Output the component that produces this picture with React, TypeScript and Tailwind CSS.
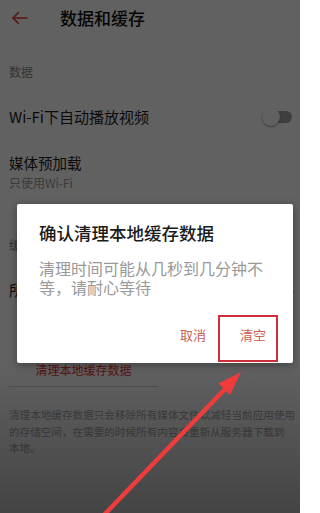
import React from "react";

export default function App() {
  return (
    <div className="relative w-[300px] h-[513px] overflow-hidden bg-white font-['Noto_Sans_CJK_SC','Noto_Sans',sans-serif]">
      {/* Page content */}
      <div className="flex flex-col">
        <div className="flex items-center h-[35px] pl-[11px]">
          <svg width="17" height="14" viewBox="0 0 17 14" fill="none" stroke="#e53935" strokeWidth="1.6" strokeLinecap="round" strokeLinejoin="round">
            <path d="M16 7H2" />
            <path d="M7.5 1.5L2 7l5.5 5.5" />
          </svg>
          <span className="ml-[32px] text-[17px] leading-[22px] font-medium text-[#111]">数据和缓存</span>
        </div>

        <div className="mt-[29px] pl-[9px] text-[12px] leading-[16px] text-[#8a8a8a]">数据</div>

        <div className="mt-[27px] flex items-center justify-between pl-[9px] pr-[8px] h-[20px]">
          <span className="text-[15px] leading-[20px] text-[#1e1e1e]">Wi-Fi下自动播放视频</span>
          <div className="relative w-[30px] h-[18px] flex items-center">
            <div className="absolute left-[3px] right-0 h-[12px] rounded-full bg-[#a4a4a4]" />
            <div className="absolute left-0 w-[18px] h-[18px] rounded-full bg-white shadow-[0_1px_2px_rgba(0,0,0,0.4)]" />
          </div>
        </div>

        <div className="mt-[26px] pl-[9px] text-[14.5px] leading-[20px] text-[#1e1e1e]">媒体预加载</div>
        <div className="mt-[2px] pl-[9px] text-[12px] leading-[16px] text-[#999]">只使用Wi-Fi</div>

        <div className="mt-[46px] pl-[9px] text-[12px] leading-[16px] text-[#8a8a8a]">缓存</div>

        <div className="mt-[27px] flex items-center justify-between pl-[9px] pr-[6px] h-[20px]">
          <span className="text-[14.5px] leading-[20px] text-[#1e1e1e]">所占空间</span>
          <span className="text-[13px] leading-[20px] text-[#999]">0B</span>
        </div>

        <div className="mt-[62px] ml-[9px] w-[149px] border-b border-[#cfcfcf] pb-[8px] text-center text-[12px] leading-[16px] text-[#e53935]">
          清理本地缓存数据
        </div>

        <div className="mt-[20px] pl-[9px] text-[10.6px] leading-[16.5px] text-[#a8a8a8] whitespace-nowrap">
          <div>清理本地缓存数据只会移除所有媒体文件以减轻当前应用使用</div>
          <div>的存储空间，在需要的时候所有内容会重新从服务器下载到</div>
          <div>本地。</div>
        </div>
      </div>

      {/* Dim overlay */}
      <div className="absolute inset-0 bg-black/[0.62]" />
      <div className="absolute inset-x-0 bottom-0 h-[150px] bg-linear-to-b from-transparent to-black/30" />

      {/* Dialog */}
      <div className="absolute left-[17px] top-[204px] w-[276px] h-[159px] bg-white rounded-[2px] shadow-[0_2px_8px_rgba(0,0,0,0.35)] flex flex-col pt-[17px] px-[22px]">
        <div className="text-[17.5px] leading-[24px] font-medium text-[#1a1a1a]">确认清理本地缓存数据</div>
        <div className="mt-[14px] text-[16px] leading-[19px] text-[#999]">清理时间可能从几秒到几分钟不等，请耐心等待</div>
        <div className="mt-[28px] flex justify-end gap-[34px] pr-[5px] text-[13px] leading-[20px] text-[#c9614f]">
          <span>取消</span>
          <span>清空</span>
        </div>
      </div>

      {/* Annotation box */}
      <div className="absolute left-[218px] top-[315px] w-[60px] h-[47px] border-2 border-[#cc2f3b]" />

      {/* Annotation arrow */}
      <svg className="absolute left-0 top-0" width="300" height="513" viewBox="0 0 300 513">
        <line x1="103" y1="516" x2="226" y2="388" stroke="#ef3b3b" strokeWidth="4.5" strokeLinecap="round" />
        <polygon points="241,372 218.5,383.5 230,395" fill="#ef3b3b" />
      </svg>
    </div>
  );
}
